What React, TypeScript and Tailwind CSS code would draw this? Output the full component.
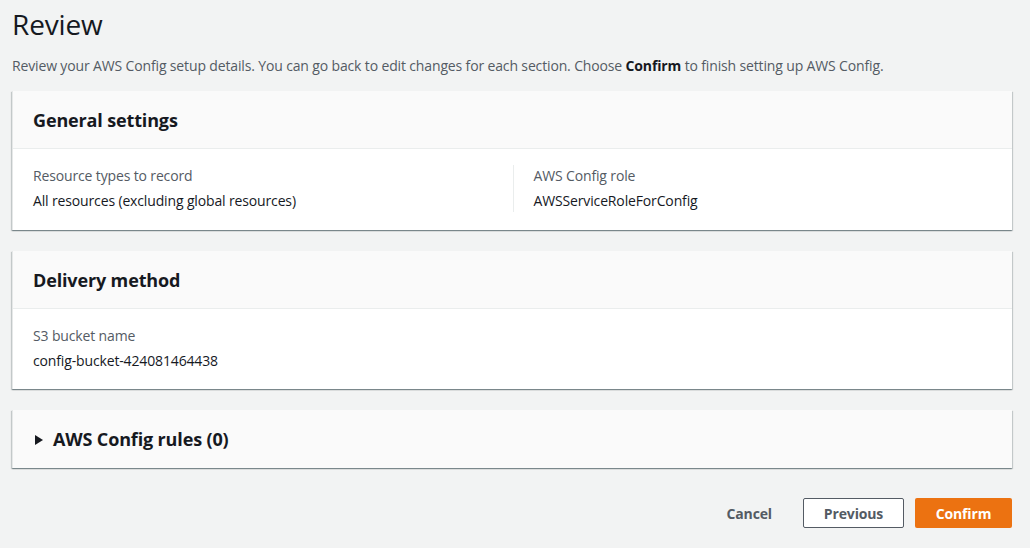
import { ReactNode } from 'react'

function Card({ title, children }: { title: ReactNode; children?: ReactNode }) {
  return (
    <div className="bg-white border-l border-[#e6e8e8] shadow-[0_1px_1px_0_rgba(0,28,36,0.3),1px_1px_1px_0_rgba(0,28,36,0.15),-1px_1px_1px_0_rgba(0,28,36,0.15)]">
      <div className={`bg-[#fafafa] h-[58px] px-5 flex items-center ${children ? 'border-b border-[#eaeded]' : ''}`}>
        <h2 className="text-[18px] font-bold text-[#16191f] pt-[1px]">{title}</h2>
      </div>
      {children}
    </div>
  )
}

function Field({ label, value }: { label: string; value: string }) {
  return (
    <div>
      <div className="text-[14px] text-[#545b64] leading-[22px]">{label}</div>
      <div className="text-[14px] text-[#16191f] leading-[22px] mt-[3px]">{value}</div>
    </div>
  )
}

export default function App() {
  return (
    <div className="min-h-[548px] bg-[#f2f3f3] px-3 pt-[6px] font-['Open_Sans',sans-serif] tracking-[-0.009em]">
      <h1 className="text-[28px] leading-[36px] text-[#16191f]">Review</h1>
      <p className="mt-[13px] text-[14px] leading-[22px] text-[#545b64]">
        Review your AWS Config setup details. You can go back to edit changes for each section. Choose{' '}
        <span className="font-bold text-[#16191f]">Confirm</span> to finish setting up AWS Config.
      </p>

      <div className="mt-[14px] w-[1000px] flex flex-col gap-[21px]">
        <Card title="General settings">
          <div className="grid grid-cols-2 px-5 pt-[16px] pb-[18px]">
            <Field label="Resource types to record" value="All resources (excluding global resources)" />
            <div className="border-l border-[#eaeded] pl-5">
              <Field label="AWS Config role" value="AWSServiceRoleForConfig" />
            </div>
          </div>
        </Card>

        <Card title="Delivery method">
          <div className="px-5 pt-[16px] pb-[17px]">
            <Field label="S3 bucket name" value="config-bucket-424081464438" />
          </div>
        </Card>

        <Card
          title={
            <span className="flex items-center gap-2">
              <svg width="12" height="12" viewBox="0 0 12 12" className="text-[#16191f]">
                <path d="M2 1 L10 6 L2 11 Z" fill="currentColor" />
              </svg>
              AWS Config rules (0)
            </span>
          }
        />
      </div>

      <div className="w-[1000px] flex justify-end items-center gap-[11px] mt-[30px]">
        <button className="px-5 h-[30px] text-[14px] font-bold text-[#545b64]">Cancel</button>
        <button className="w-[101px] h-[30px] text-[14px] font-bold text-[#545b64] bg-white border border-[#545b64] rounded-[2px]">
          Previous
        </button>
        <button className="w-[97px] h-[30px] text-[14px] font-bold text-white bg-[#ec7211] rounded-[2px]">
          Confirm
        </button>
      </div>
    </div>
  )
}
